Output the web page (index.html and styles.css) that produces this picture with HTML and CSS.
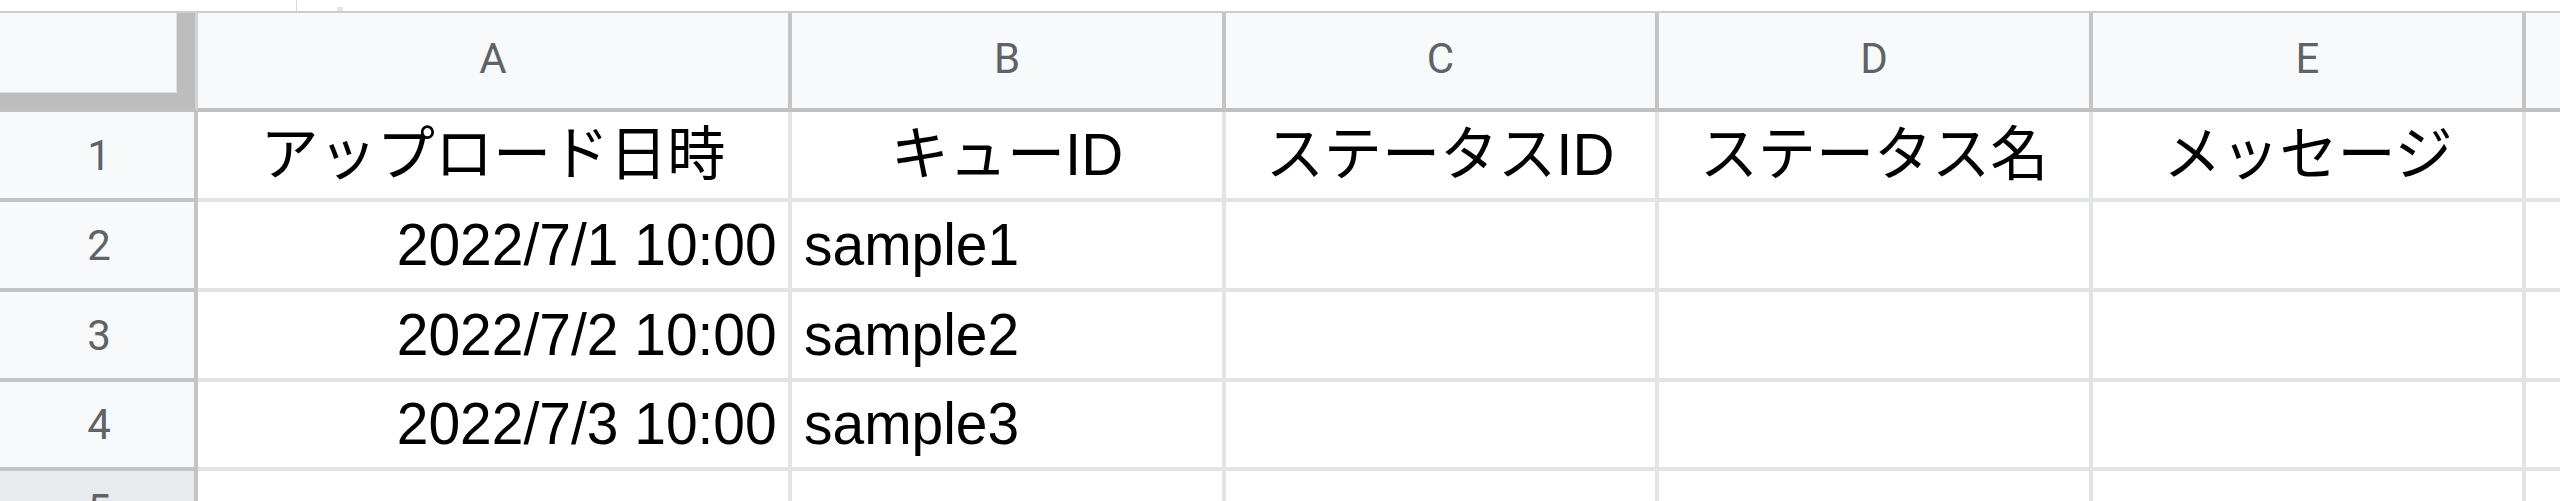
FILE: index.html
```html
<!DOCTYPE html>
<html lang="ja">
<head>
<meta charset="utf-8">
<title>Sheet</title>
<link rel="stylesheet" href="styles.css">
</head>
<body>
<div class="topbar"><span class="tick"></span><span class="blob"></span></div>
<div class="sheet">
  <div class="corner"><div class="corner-fill"></div></div>
  <div class="ch">A</div>
  <div class="ch">B</div>
  <div class="ch">C</div>
  <div class="ch">D</div>
  <div class="ch">E</div>
  <div class="ch last"></div>

  <div class="rh">1</div>
  <div class="c center"><span class="t jp">アップロード日時</span></div>
  <div class="c center"><span class="t jp">キューID</span></div>
  <div class="c center"><span class="t jp">ステータスID</span></div>
  <div class="c center"><span class="t jp">ステータス名</span></div>
  <div class="c center"><span class="t jp">メッセージ</span></div>
  <div class="c last"></div>

  <div class="rh">2</div>
  <div class="c right"><span class="t">2022/7/1 10:00</span></div>
  <div class="c left"><span class="t">sample1</span></div>
  <div class="c"></div>
  <div class="c"></div>
  <div class="c"></div>
  <div class="c last"></div>

  <div class="rh">3</div>
  <div class="c right"><span class="t">2022/7/2 10:00</span></div>
  <div class="c left"><span class="t">sample2</span></div>
  <div class="c"></div>
  <div class="c"></div>
  <div class="c"></div>
  <div class="c last"></div>

  <div class="rh">4</div>
  <div class="c right"><span class="t">2022/7/3 10:00</span></div>
  <div class="c left"><span class="t">sample3</span></div>
  <div class="c"></div>
  <div class="c"></div>
  <div class="c"></div>
  <div class="c last"></div>

  <div class="rh r5">5</div>
  <div class="c"></div>
  <div class="c"></div>
  <div class="c"></div>
  <div class="c"></div>
  <div class="c"></div>
  <div class="c last"></div>
</div>
</body>
</html>
```

FILE: styles.css
```css
html, body {
  margin: 0;
  padding: 0;
  background: #ffffff;
  overflow: hidden;
}

.topbar {
  height: 11px;
  display: flex;
  align-items: stretch;
  padding-left: 296px;
  gap: 40px;
}

.tick {
  width: 1px;
  background: #d6d6d6;
}

.blob {
  width: 6px;
  height: 4px;
  margin-top: 7px;
  background: #e3e3e3;
}

.sheet {
  display: grid;
  grid-template-columns: 198px 594px 434px 433px 434px 433px 1fr;
  grid-template-rows: 99px 90px 90px 90px 89px 40px;
  border-top: 2px solid #cdcdcd;
  height: 488px;
  overflow: hidden;
}

.sheet > div {
  box-sizing: border-box;
  display: flex;
  align-items: center;
  overflow: hidden;
  white-space: nowrap;
}

.corner {
  background: #bdbdbd;
  border-right: 3px solid #d3d3d3;
  border-bottom: 4px solid #c0c0c0;
  align-items: flex-start !important;
}

.corner-fill {
  width: 177px;
  height: 80px;
  background: #f8f9fa;
  box-sizing: border-box;
  border-right: 1px solid #e0e0e0;
  border-bottom: 1px solid #e0e0e0;
}

.ch {
  background: #f8f9fa;
  border-right: 4px solid #c4c4c4;
  border-bottom: 4px solid #c0c0c0;
  justify-content: center;
  padding-bottom: 4px;
  font-family: Roboto, "Liberation Sans", sans-serif;
  font-size: 42px;
  color: #5f6368;
}

.ch.last {
  border-right: none;
}

.rh {
  background: #f8f9fa;
  border-right: 4px solid #c4c4c4;
  border-bottom: 4px solid #c4c4c4;
  justify-content: center;
  font-family: Roboto, "Liberation Sans", sans-serif;
  font-size: 42px;
  color: #5f6368;
  padding-left: 4px;
}

.rh.r5 {
  background: #e8eaed;
  align-items: flex-start !important;
  padding-top: 14px;
  border-bottom: none;
}

.c {
  background: #ffffff;
  border-right: 4px solid #e2e3e3;
  border-bottom: 4px solid #e2e3e3;
  font-family: "Liberation Sans", "Noto Sans CJK JP", sans-serif;
  font-size: 59px;
  color: #000000;
  line-height: 1;
}

.c.last {
  border-right: none;
}

.c.center {
  justify-content: center;
}

.c.right {
  justify-content: flex-end;
  padding-right: 11px;
}

.c.left {
  justify-content: flex-start;
  padding-left: 12px;
}

.t {
  display: inline-block;
  transform: scaleX(0.965);
}

.t.jp {
  transform: scaleX(0.985);
}

.c.right .t {
  transform-origin: right center;
}

.c.left .t {
  transform-origin: left center;
}

.c.center .t {
  transform-origin: center center;
}
```
